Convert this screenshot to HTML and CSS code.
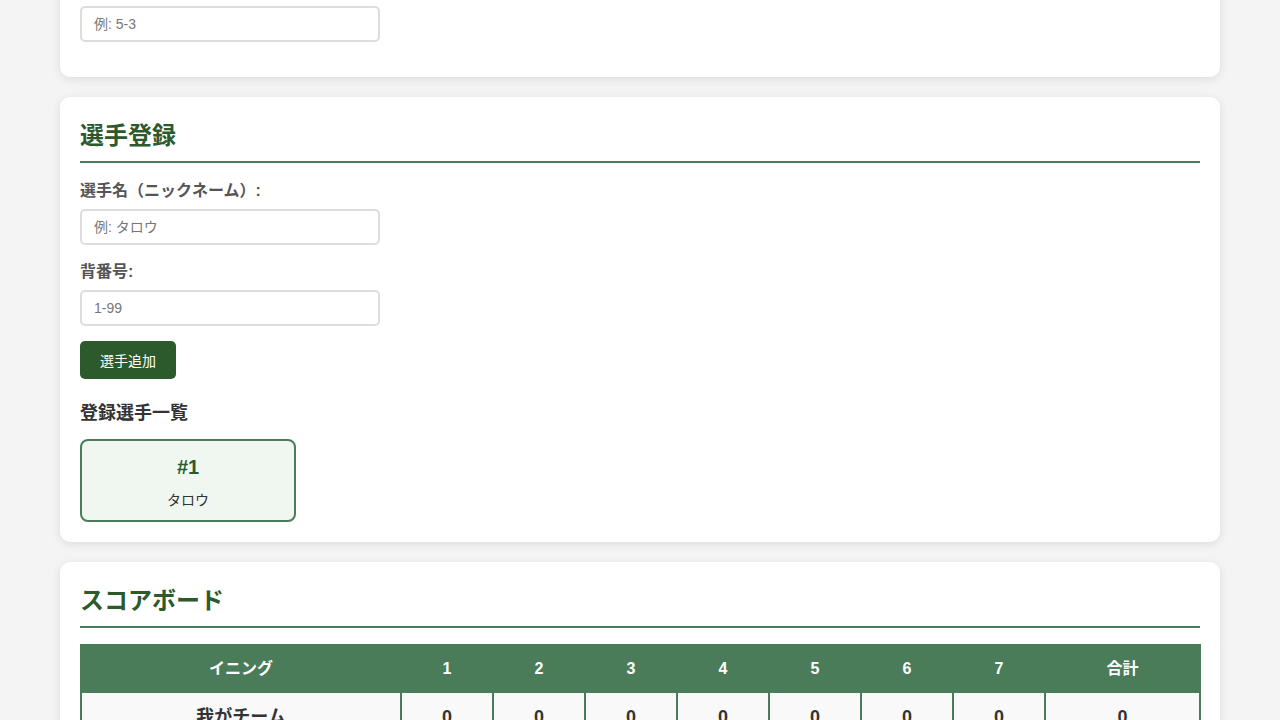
FILE: index.html
```html
<!DOCTYPE html>
<html lang="ja">
<head>
<meta charset="utf-8">
<title>野球スコア</title>
<link rel="stylesheet" href="styles.css">
</head>
<body>
<div class="page">
  <section class="card">
    <div class="form-group">
      <label class="label">スコア:</label>
      <input class="input" type="text" placeholder="例: 5-3">
    </div>
  </section>

  <section class="card">
    <h2 class="card-title">選手登録</h2>
    <div class="form-group">
      <label class="label">選手名（ニックネーム）:</label>
      <input class="input" type="text" placeholder="例: タロウ">
    </div>
    <div class="form-group">
      <label class="label">背番号:</label>
      <input class="input" type="text" placeholder="1-99">
    </div>
    <button class="btn">選手追加</button>
    <h3 class="sub-title">登録選手一覧</h3>
    <div class="player-list">
      <div class="player-card">
        <div class="player-num">#1</div>
        <div class="player-name">タロウ</div>
      </div>
    </div>
  </section>

  <section class="card">
    <h2 class="card-title">スコアボード</h2>
    <table class="score">
      <thead>
        <tr>
          <th class="col-team">イニング</th>
          <th class="col-inn">1</th>
          <th class="col-inn">2</th>
          <th class="col-inn">3</th>
          <th class="col-inn">4</th>
          <th class="col-inn">5</th>
          <th class="col-inn">6</th>
          <th class="col-inn">7</th>
          <th class="col-total">合計</th>
        </tr>
      </thead>
      <tbody>
        <tr>
          <td>我がチーム</td>
          <td>0</td><td>0</td><td>0</td><td>0</td><td>0</td><td>0</td><td>0</td>
          <td>0</td>
        </tr>
        <tr>
          <td>相手チーム</td>
          <td>0</td><td>0</td><td>0</td><td>0</td><td>0</td><td>0</td><td>0</td>
          <td>0</td>
        </tr>
      </tbody>
    </table>
  </section>
</div>
</body>
</html>
```

FILE: styles.css
```css
* { box-sizing: border-box; }

body {
  margin: 0;
  background: #f4f4f4;
  font-family: "Liberation Sans", "Noto Sans CJK JP", sans-serif;
  color: #333;
}

.page {
  width: 1160px;
  margin: -44px auto 0;
  display: flex;
  flex-direction: column;
  gap: 20px;
}

.card {
  background: #fff;
  border-radius: 10px;
  box-shadow: 0 2px 10px rgba(0, 0, 0, 0.1);
  padding: 20px;
}

.card-title {
  margin: 0 0 16px;
  font-size: 24px;
  line-height: 38px;
  font-weight: bold;
  color: #2d5a2d;
  padding-bottom: 6px;
  border-bottom: 2px solid #4a7c59;
}

.form-group {
  margin-bottom: 15px;
}

.label {
  display: block;
  font-size: 16px;
  line-height: 24px;
  font-weight: bold;
  color: #555;
  margin-bottom: 6px;
}

.input {
  display: block;
  width: 300px;
  height: 36px;
  padding: 0 12px;
  border: 2px solid #ddd;
  border-radius: 5px;
  font-family: inherit;
  font-size: 14px;
  color: #333;
  outline: none;
}

.input::placeholder { color: #777; }

.btn {
  display: block;
  height: 38px;
  padding: 0 20px;
  border: none;
  border-radius: 5px;
  background: #2d5a2d;
  color: #fff;
  font-family: inherit;
  font-size: 14px;
  cursor: pointer;
}

.sub-title {
  margin: 21px 0 13px;
  font-size: 18px;
  line-height: 26px;
  font-weight: bold;
  color: #333;
}

.player-list {
  display: grid;
  grid-template-columns: repeat(auto-fill, 216px);
  gap: 10px;
}

.player-card {
  border: 2px solid #4a7c59;
  border-radius: 8px;
  background: #f0f7f0;
  padding: 14px 10px 10px;
  text-align: center;
}

.player-num {
  font-size: 20px;
  line-height: 24px;
  font-weight: bold;
  color: #2d5a2d;
  margin-bottom: 11px;
}

.player-name {
  font-size: 14px;
  line-height: 20px;
  color: #333;
}

.score {
  width: 1119px;
  border-collapse: collapse;
  table-layout: fixed;
}

.score th,
.score td {
  border: 2px solid #4a7c59;
  text-align: center;
  padding: 12px;
  font-weight: bold;
}

.score th {
  background: #4a7c59;
  color: #fff;
  font-size: 16px;
  line-height: 21px;
}

.score td {
  background: #f9f9f9;
  color: #333;
  font-size: 18px;
  line-height: 24px;
}

.col-team { width: 320px; }
.col-inn { width: 92px; }
.col-total { width: 155px; }
```
